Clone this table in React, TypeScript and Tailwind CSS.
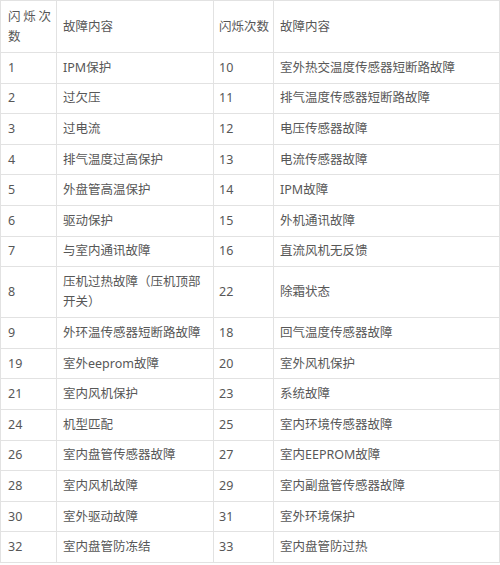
import React from "react";

const rows: [string, string, string, string][] = [
  ["1", "IPM保护", "10", "室外热交温度传感器短断路故障"],
  ["2", "过欠压", "11", "排气温度传感器短断路故障"],
  ["3", "过电流", "12", "电压传感器故障"],
  ["4", "排气温度过高保护", "13", "电流传感器故障"],
  ["5", "外盘管高温保护", "14", "IPM故障"],
  ["6", "驱动保护", "15", "外机通讯故障"],
  ["7", "与室内通讯故障", "16", "直流风机无反馈"],
  ["8", "压机过热故障（压机顶部开关）", "22", "除霜状态"],
  ["9", "外环温传感器短断路故障", "18", "回气温度传感器故障"],
  ["19", "室外eeprom故障", "20", "室外风机保护"],
  ["21", "室内风机保护", "23", "系统故障"],
  ["24", "机型匹配", "25", "室内环境传感器故障"],
  ["26", "室内盘管传感器故障", "27", "室内EEPROM故障"],
  ["28", "室内风机故障", "29", "室内副盘管传感器故障"],
  ["30", "室外驱动故障", "31", "室外环境保护"],
  ["32", "室内盘管防冻结", "33", "室内盘管防过热"],
];

const cell = "border border-[#e2e2e2] align-middle text-left font-normal leading-[20px]";

export default function App() {
  return (
    <div
      className="w-[500px] h-[565px] bg-white text-[#575757] text-[12.5px]"
      style={{ fontFamily: '"Noto Sans", "Noto Sans CJK SC", sans-serif' }}
      lang="zh-CN"
    >
      <table className="w-[499px] border-collapse table-fixed">
        <colgroup>
          <col className="w-[56px]" />
          <col className="w-[157px]" />
          <col className="w-[60px]" />
          <col className="w-[226px]" />
        </colgroup>
        <thead>
          <tr className="h-[52px]">
            <th className={`${cell} pl-[7px] pr-[5px]`}>
              <div className="flex justify-between">
                <span>闪</span>
                <span>烁</span>
                <span>次</span>
              </div>
              <div>数</div>
            </th>
            <th className={`${cell} px-[6px]`}>故障内容</th>
            <th className={`${cell} pl-[5px] pr-0 whitespace-nowrap`}>闪烁次数</th>
            <th className={`${cell} px-[6px]`}>故障内容</th>
          </tr>
        </thead>
        <tbody>
          {rows.map((r, i) => (
            <tr key={i} className={r[0] === "8" ? "h-[51px]" : "h-[30.6px]"}>
              <td className={`${cell} pl-[7px] pr-[4px]`}>{r[0]}</td>
              <td className={`${cell} pl-[6px] pr-[8px]`}>{r[1]}</td>
              <td className={`${cell} pl-[5px] pr-[4px]`}>{r[2]}</td>
              <td className={`${cell} px-[6px]`}>{r[3]}</td>
            </tr>
          ))}
        </tbody>
      </table>
    </div>
  );
}
